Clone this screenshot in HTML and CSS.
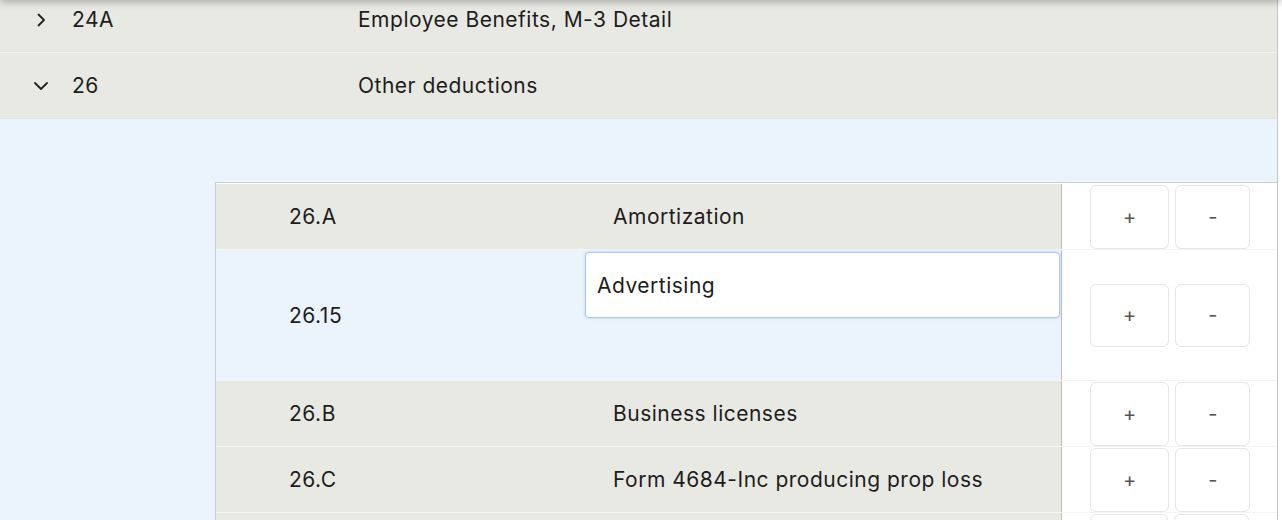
FILE: index.html
```html
<!DOCTYPE html>
<html>
<head>
<meta charset="utf-8">
<link rel="stylesheet" href="styles.css">
</head>
<body>
<div class="page">
  <div class="row">
    <span class="chev"><svg width="16" height="16" viewBox="0 0 16 16"><polyline points="5.5,2.5 11,8 5.5,13.5" fill="none" stroke="#222" stroke-width="1.8" stroke-linecap="round" stroke-linejoin="round"/></svg></span>
    <span class="code">24A</span>
    <span class="desc">Employee Benefits, M-3 Detail</span>
  </div>
  <div class="row open">
    <span class="chev"><svg width="16" height="16" viewBox="0 0 16 16"><polyline points="2,5 8,11 14,5" fill="none" stroke="#222" stroke-width="1.8" stroke-linecap="round" stroke-linejoin="round"/></svg></span>
    <span class="code">26</span>
    <span class="desc">Other deductions</span>
  </div>
  <div class="expand">
    <div class="subtable">
      <div class="subrow">
        <div class="cells"><div class="scode">26.A</div><div class="sdesc">Amortization</div></div>
        <div class="actions"><button class="btn">+</button><button class="btn">-</button></div>
      </div>
      <div class="subrow editing">
        <div class="cells"><div class="scode">26.15</div><div class="sdesc"><input class="edit" type="text" value="Advertising"></div></div>
        <div class="actions"><button class="btn">+</button><button class="btn">-</button></div>
      </div>
      <div class="subrow">
        <div class="cells"><div class="scode">26.B</div><div class="sdesc">Business licenses</div></div>
        <div class="actions"><button class="btn">+</button><button class="btn">-</button></div>
      </div>
      <div class="subrow">
        <div class="cells"><div class="scode">26.C</div><div class="sdesc">Form 4684-Inc producing prop loss</div></div>
        <div class="actions"><button class="btn">+</button><button class="btn">-</button></div>
      </div>
      <div class="subrow">
        <div class="cells"></div>
        <div class="actions"><span class="btn stub"></span><span class="btn stub small"></span></div>
      </div>
    </div>
  </div>
</div>
<div class="topshade"></div>
</body>
</html>
```
FILE: styles.css
```css
html, body {
  margin: 0;
  padding: 0;
  background: #ffffff;
  overflow: hidden;
}
body {
  font-family: Inter, "Liberation Sans", sans-serif;
  font-size: 21px;
  letter-spacing: 0.5px;
  color: #1d1d1d;
}
.page {
  width: 1277px;
  margin-top: -13px;
  border-right: 1px solid #c4c4c4;
}
.row {
  display: grid;
  grid-template-columns: 72px 286px 1fr;
  align-items: center;
  height: 65px;
  background: #e9e9e4;
  border-bottom: 1px solid #f3f3f0;
}
.row.open {
  border-bottom: 1px solid #dbe2ec;
}
.chev {
  display: flex;
  padding-left: 33px;
}
.expand {
  background: #ebf3fd;
  padding: 63px 0 0 215px;
}
.subtable {
  background: #ffffff;
  border-top: 1px solid #c8ccd3;
  border-left: 1px solid #c8ccd3;
  padding-top: 1px;
}
.subrow {
  display: flex;
  border-bottom: 1px solid #f4f4f2;
}
.cells {
  display: flex;
  width: 845px;
  min-height: 65px;
  background: #e9e9e4;
  border-right: 1px solid #bcbcbc;
}
.editing .cells {
  min-height: 130px;
  background: #ebf3fd;
}
.scode {
  width: 296px;
  padding-left: 73px;
  display: flex;
  align-items: center;
}
.sdesc {
  flex: 1;
  padding-left: 28px;
  display: flex;
  align-items: center;
}
.editing .sdesc {
  padding: 2px 1px 0 0;
  align-items: flex-start;
}
.edit {
  width: 100%;
  height: 66px;
  box-sizing: border-box;
  border: 1px solid #a9c9f3;
  border-radius: 4px;
  box-shadow: 0 0 3px rgba(110, 160, 235, 0.45);
  background: #ffffff;
  padding: 0 11px;
  font: inherit;
  letter-spacing: inherit;
  color: #1d1d1d;
  outline: none;
}
.actions {
  flex: 1;
  display: flex;
  align-items: center;
  gap: 6px;
  padding-left: 28px;
  background: #ffffff;
}
.btn {
  height: 64px;
  padding: 0 32px;
  background: #ffffff;
  border: 1px solid #e6e6e6;
  border-radius: 6px;
  font-family: Inter, "Liberation Sans", sans-serif;
  font-size: 20px;
  letter-spacing: 0;
  color: #555555;
}
.editing .btn {
  height: 63px;
}
.stub {
  display: block;
  box-sizing: border-box;
  width: 78px;
  padding: 0;
}
.stub.small {
  width: 75px;
}
.topshade {
  position: fixed;
  left: 0;
  right: 0;
  top: -12px;
  height: 12px;
  box-shadow: 0 1px 9px rgba(0, 0, 0, 0.35);
}
```
